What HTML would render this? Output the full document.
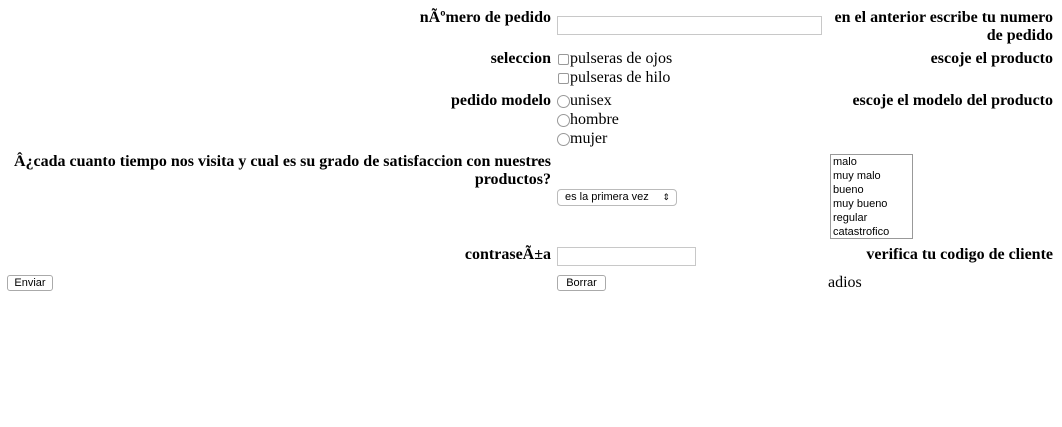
<!DOCTYPE html>
<html><head><meta charset="utf-8"><style>
body{margin:0;width:1062px;height:427px;background:#fff;font-family:"Liberation Serif",serif;font-size:16px;color:#000;position:relative;overflow:hidden}
.a{position:absolute;line-height:18px;white-space:nowrap}
.b{font-weight:bold}
.r1{right:511px;text-align:right}
.r3{right:9px;text-align:right}
.inp{position:absolute;border:1px solid #c8c8c8;background:#fff;box-sizing:border-box}
.cb{position:absolute;width:11px;height:11px;border:1px solid #999;border-radius:2px;box-sizing:border-box;background:#fff}
.rd{position:absolute;width:13px;height:13px;border:1px solid #999;border-radius:50%;box-sizing:border-box;background:#fff}
.btn{position:absolute;height:16px;border:1px solid #aaa;border-radius:3px;box-sizing:border-box;font:11px "Liberation Sans",sans-serif;line-height:14px;text-align:center;background:#fff}
.sm{font:11px "Liberation Sans",sans-serif;line-height:14px}
</style></head><body>
<div class="a b r1" style="top:9px">nÃºmero de pedido</div>
<div class="inp" style="left:557px;top:16px;width:265px;height:19px"></div>
<div class="a b r3" style="top:9px">en el anterior escribe tu numero<br>de pedido</div>

<div class="a b r1" style="top:50px">seleccion</div>
<div class="cb" style="left:558px;top:54px"></div><div class="a" style="left:570px;top:50px">pulseras de ojos</div>
<div class="cb" style="left:558px;top:73px"></div><div class="a" style="left:570px;top:69px">pulseras de hilo</div>
<div class="a b r3" style="top:50px">escoje el producto</div>

<div class="a b r1" style="top:92px">pedido modelo</div>
<div class="rd" style="left:557px;top:95px"></div><div class="a" style="left:570px;top:92px">unisex</div>
<div class="rd" style="left:557px;top:114px"></div><div class="a" style="left:570px;top:111px">hombre</div>
<div class="rd" style="left:557px;top:133px"></div><div class="a" style="left:570px;top:130px">mujer</div>
<div class="a b r3" style="top:92px">escoje el modelo del producto</div>

<div class="a b r1" style="top:153px">Â¿cada cuanto tiempo nos visita y cual es su grado de satisfaccion con nuestres<br>productos?</div>
<div class="btn" style="left:557px;top:189px;width:120px;height:17px;border-radius:4px;text-align:left;padding-left:7px;border-color:#bbb">es la primera vez <span style="position:absolute;right:6px;top:0;font-size:9px">⇕</span></div>
<div style="position:absolute;left:830px;top:154px;width:83px;height:85px;border:1px solid #999;box-sizing:border-box;padding:0 0 0 2px" class="sm">malo<br>muy malo<br>bueno<br>muy bueno<br>regular<br>catastrofico</div>

<div class="a b r1" style="top:246px">contraseÃ±a</div>
<div class="inp" style="left:557px;top:247px;width:139px;height:19px"></div>
<div class="a b r3" style="top:246px">verifica tu codigo de cliente</div>

<div class="btn" style="left:7px;top:275px;width:46px">Enviar</div>
<div class="btn" style="left:557px;top:275px;width:49px">Borrar</div>
<div class="a" style="left:828px;top:274px">adios</div>
</body></html>
